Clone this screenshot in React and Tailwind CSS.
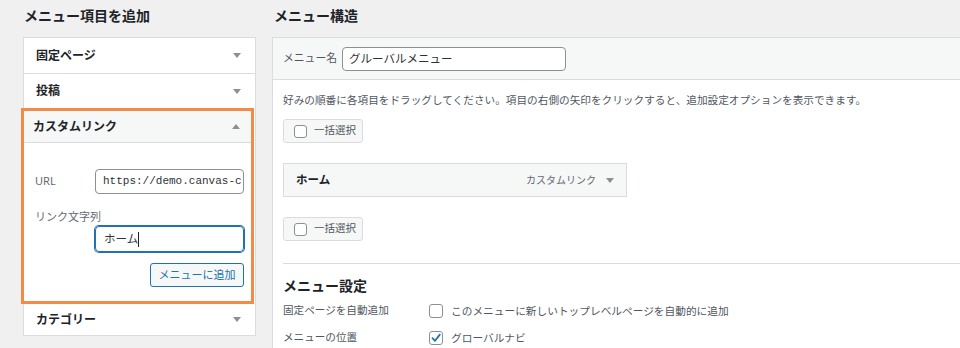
import React from 'react';

const jp = { fontFamily: '"Noto Sans", "Noto Sans CJK JP", sans-serif' };

const Arrow = ({ up = false }) => (
  <svg width="8" height="5" viewBox="0 0 8 5" className="shrink-0">
    {up ? <polygon points="0,5 8,5 4,0" fill="#8c8f94" /> : <polygon points="0,0 8,0 4,5" fill="#8c8f94" />}
  </svg>
);

const Checkbox = ({ checked = false, size = 'w-[14px] h-[14px]' }) => (
  <span className={`${size} shrink-0 border border-[#8c8f94] rounded-[3px] bg-white flex items-center justify-center`}>
    {checked && (
      <svg width="12" height="12" viewBox="0 0 12 12">
        <path d="M2.5 6.2 L5 8.8 L9.8 2.6" stroke="#2271b1" strokeWidth="1.8" fill="none" strokeLinecap="round" strokeLinejoin="round" />
      </svg>
    )}
  </span>
);

const BulkSelect = () => (
  <div className="w-[80px] h-[24px] flex items-center gap-[7px] pl-[10px] bg-[#f6f7f7] border border-[#dcdcde] rounded-[3px]">
    <Checkbox size="w-[13px] h-[13px]" />
    <span className="text-[10.5px] text-[#50575e]">一括選択</span>
  </div>
);

export default function App() {
  return (
    <div className="w-[960px] h-[348px] overflow-hidden bg-[#f0f0f1] flex" style={jp}>
      {/* left column */}
      <div className="ml-[23px] w-[233px] shrink-0">
        <div className="h-[37px] pt-[6px]">
          <h2 className="ml-[1px] text-[14px] leading-[20px] font-bold text-[#1d2327]">メニュー項目を追加</h2>
        </div>
        <div className="border border-[#dcdcde] bg-white">
          <div className="h-[36px] px-[12px] flex items-center justify-between border-b border-[#dcdcde]">
            <span className="text-[12px] font-bold text-[#1d2327]">固定ページ</span>
            <span className="mr-[2px]"><Arrow /></span>
          </div>
          <div className="h-[34px] px-[12px] flex items-center justify-between">
            <span className="text-[12px] font-bold text-[#1d2327]">投稿</span>
            <span className="mr-[2px]"><Arrow /></span>
          </div>

          <div className="-ml-[3px] w-[233px] border-[3px] border-[#f28a48]">
            <div className="h-[32px] px-[9px] flex items-center justify-between bg-[#f6f7f7] border-b border-[#dcdcde]">
              <span className="text-[12px] font-bold text-[#1d2327]">カスタムリンク</span>
              <span className="mr-[2px]"><Arrow up /></span>
            </div>
            <div className="pl-[11px] pr-[7px] pt-[26px] pb-[14px] bg-white">
              <div className="flex items-center">
                <span className="w-[60px] text-[11px] text-[#646970]">URL</span>
                <div className="w-[149px] h-[25px] border border-[#8c8f94] rounded-[4px] overflow-hidden flex items-center pl-[7px]">
                  <span className="whitespace-nowrap text-[11px] text-[#2c3338]" style={{ fontFamily: '"Liberation Mono", monospace' }}>
                    https://demo.canvas-c
                  </span>
                </div>
              </div>
              <div className="mt-[16px] text-[11px] leading-[14px] text-[#646970]">リンク文字列</div>
              <div className="mt-[2px] ml-[60px] w-[149px] h-[26px] border border-[#2271b1] shadow-[0_0_0_1px_#2271b1] rounded-[4px] flex items-center pl-[8px]">
                <span className="text-[11.5px] text-[#2c3338]">ホーム</span>
                <span className="w-px h-[15px] bg-[#1d2327]" />
              </div>
              <div className="mt-[11px] flex justify-end">
                <div className="w-[94px] h-[24px] border border-[#2271b1] rounded-[3px] bg-[#f6f7f7] flex items-center justify-center">
                  <span className="text-[11px] text-[#2271b1]">メニューに追加</span>
                </div>
              </div>
            </div>
          </div>

          <div className="h-[31px] px-[12px] flex items-center justify-between">
            <span className="text-[12px] font-bold text-[#1d2327]">カテゴリー</span>
            <span className="mr-[2px]"><Arrow /></span>
          </div>
        </div>
      </div>

      {/* right column */}
      <div className="ml-[16px] w-[720px] shrink-0">
        <div className="h-[37px] pt-[6px]">
          <h2 className="ml-[2px] text-[14px] leading-[20px] font-bold text-[#1d2327]">メニュー構造</h2>
        </div>
        <div className="border border-[#dcdcde] bg-white h-[330px]">
          <div className="h-[42px] bg-[#f6f7f7] border-b border-[#dcdcde] flex items-center pl-[10px]">
            <span className="w-[59px] text-[10.8px] text-[#50575e]">メニュー名</span>
            <div className="w-[224px] h-[24px] bg-white border border-[#8c8f94] rounded-[4px] flex items-center pl-[6px]">
              <span className="text-[11.5px] text-[#2c3338]">グルーバルメニュー</span>
            </div>
          </div>
          <div className="pl-[10px]">
            <p className="mt-[12px] text-[10.65px] leading-[16px] text-[#50575e] whitespace-nowrap">
              好みの順番に各項目をドラッグしてください。項目の右側の矢印をクリックすると、追加設定オプションを表示できます。
            </p>
            <div className="mt-[11px]"><BulkSelect /></div>
            <div className="mt-[20px] w-[344px] h-[34px] bg-[#f6f7f7] border border-[#dcdcde] flex items-center justify-between pl-[12px] pr-[12px]">
              <span className="text-[11.5px] font-bold text-[#1d2327]">ホーム</span>
              <div className="flex items-center gap-[10px]">
                <span className="text-[10px] text-[#646970]">カスタムリンク</span>
                <Arrow />
              </div>
            </div>
            <div className="mt-[20px]"><BulkSelect /></div>
            <div className="mt-[22px] border-t border-[#dcdcde]" />
            <h3 className="mt-[12px] text-[14px] leading-[20px] font-bold text-[#1d2327]">メニュー設定</h3>
            <div className="mt-[7px] flex items-center h-[16px]">
              <span className="w-[146px] text-[10.6px] text-[#50575e]">固定ページを自動追加</span>
              <Checkbox />
              <span className="ml-[8px] text-[10.7px] text-[#50575e]">このメニューに新しいトップレベルページを自動的に追加</span>
            </div>
            <div className="mt-[11px] flex items-center h-[16px]">
              <span className="w-[146px] text-[10.6px] text-[#50575e]">メニューの位置</span>
              <Checkbox checked />
              <span className="ml-[8px] text-[10.7px] text-[#50575e]">グローバルナビ</span>
            </div>
          </div>
        </div>
      </div>
    </div>
  );
}
